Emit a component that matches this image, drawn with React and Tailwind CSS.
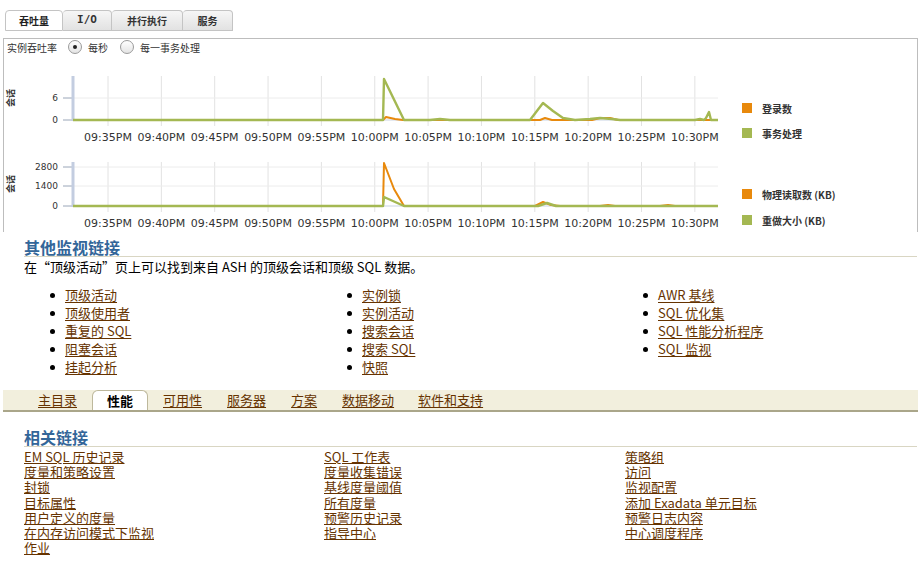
import React from 'react';

const times = ['09:35PM', '09:40PM', '09:45PM', '09:50PM', '09:55PM', '10:00PM', '10:05PM', '10:10PM', '10:15PM', '10:20PM', '10:25PM', '10:30PM'];
const gx = times.map((_, i) => 108 + i * 53.35);

function Chart({ top, axisTop, zeroY, ticks, grid, orange, green, legend }) {
  return (
    <div className="flex h-[80px]">
      <svg width="716" height="80" viewBox={`4 ${top} 716 80`} className="shrink-0">
        {gx.map((x) => (
          <line key={x} x1={x} x2={x} y1={axisTop} y2={zeroY + 6} stroke="#e2e2e2" strokeWidth="1" />
        ))}
        {grid.map((y) => (
          <line key={y} x1="73" x2="718" y1={y} y2={y} stroke="#ececec" strokeWidth="1" />
        ))}
        {ticks.map((t) => (
          <g key={t.label}>
            <line x1="63" x2="72" y1={t.y} y2={t.y} stroke="#9aa6b8" strokeWidth="1" />
            <text x="58" y={t.y + 3} textAnchor="end" fontSize="9" fontFamily="DejaVu Sans, sans-serif" fill="#333">
              {t.label}
            </text>
          </g>
        ))}
        <line x1="73" x2="73" y1={axisTop} y2={zeroY + 1} stroke="#c3cde0" strokeWidth="3" />
        <line x1="73" x2="718" y1={zeroY} y2={zeroY} stroke="#c9d3e4" strokeWidth="1" />
        <polyline points={orange} fill="none" stroke="#e8890c" strokeWidth="2" strokeLinejoin="round" />
        <polyline points={green} fill="none" stroke="#a4b852" strokeWidth="2.4" strokeLinejoin="round" />
        <text
          x="0"
          y="0"
          transform={`translate(14 ${(axisTop + zeroY) / 2}) rotate(-90)`}
          textAnchor="middle"
          fontSize="9"
          fontWeight="bold"
          fontFamily="Noto Sans CJK SC, sans-serif"
          fill="#333"
        >
          会话
        </text>
        {times.map((t, i) => (
          <text key={t} x={gx[i]} y={zeroY + 21} textAnchor="middle" fontSize="11" fontFamily="DejaVu Sans, sans-serif" fill="#333">
            {t}
          </text>
        ))}
      </svg>
      <div className={`ml-[22px] flex flex-col ${legend.pad}`}>
        {legend.items.map((it) => (
          <div key={it.label} className="flex h-[12px] items-center">
            <span className={`h-[10px] w-[10px] ${it.color}`} />
            <span className="ml-[10px] text-[10px] font-bold text-[#333]">{it.label}</span>
          </div>
        ))}
      </div>
    </div>
  );
}

function Radio({ checked, label, className }) {
  return (
    <div className={`flex items-center ${className}`}>
      <span className="flex h-[14px] w-[14px] items-center justify-center rounded-full border border-[#9a9a9a] bg-gradient-to-b from-white to-[#e4e4e4]">
        {checked && <span className="h-[4px] w-[4px] rounded-full bg-[#222]" />}
      </span>
      <span className="ml-[6px] text-[10px] text-[#333]">{label}</span>
    </div>
  );
}

function Bullet({ children }) {
  return (
    <li className="flex h-[18px] items-center">
      <span className="ml-[26px] h-[5px] w-[5px] rounded-full bg-black" />
      <a href="#" className="ml-[10px] text-[#663300] underline underline-offset-2">
        {children}
      </a>
    </li>
  );
}

const monitorCols = [
  ['顶级活动', '顶级使用者', '重复的 SQL', '阻塞会话', '挂起分析'],
  ['实例锁', '实例活动', '搜索会话', '搜索 SQL', '快照'],
  ['AWR 基线', 'SQL 优化集', 'SQL 性能分析程序', 'SQL 监视'],
];

const relatedCols = [
  ['EM SQL 历史记录', '度量和策略设置', '封锁', '目标属性', '用户定义的度量', '在内存访问模式下监视', '作业'],
  ['SQL 工作表', '度量收集错误', '基线度量阈值', '所有度量', '预警历史记录', '指导中心'],
  ['策略组', '访问', '监视配置', '添加 Exadata 单元目标', '预警日志内容', '中心调度程序'],
];

export default function App() {
  return (
    <div className="h-[563px] w-[924px] overflow-hidden bg-white text-[13px] text-black" style={{ fontFamily: '"Noto Sans CJK SC", sans-serif' }}>
      {/* top tabs */}
      <div className="flex h-[31px] items-end pl-[5px]">
        <div className="flex h-[21px] w-[58px] items-center justify-center rounded-t-[4px] border border-[#c4c4c4] bg-white text-[10px] font-bold text-[#222]">
          吞吐量
        </div>
        <div className="flex h-[21px] w-[49px] items-center justify-center rounded-t-[4px] border border-l-0 border-[#c4c4c4] bg-gradient-to-b from-[#f6f6f6] to-[#e2e2e2] text-[11px] font-bold text-[#333]" style={{ fontFamily: '"DejaVu Sans Mono", monospace' }}>
          I/O
        </div>
        <div className="flex h-[21px] w-[71px] items-center justify-center rounded-t-[4px] border border-l-0 border-[#c4c4c4] bg-gradient-to-b from-[#f6f6f6] to-[#e2e2e2] text-[10px] font-bold text-[#333]">
          并行执行
        </div>
        <div className="flex h-[21px] w-[50px] items-center justify-center rounded-t-[4px] border border-l-0 border-[#c4c4c4] bg-gradient-to-b from-[#f6f6f6] to-[#e2e2e2] text-[10px] font-bold text-[#333]">
          服务
        </div>
      </div>

      {/* chart panel */}
      <div className="ml-[3px] mt-[7px] h-[194px] w-[915px] border-x border-t border-[#bdbdbd]">
        <div className="mt-[1px] flex h-[14px] items-center">
          <span className="ml-[3px] text-[10px] text-[#333]">实例吞吐率</span>
          <Radio checked label="每秒" className="ml-[11px]" />
          <Radio label="每一事务处理" className="ml-[12px]" />
        </div>
        <div className="mt-[14px]">
          <Chart
            top={68}
            axisTop={76}
            zeroY={120}
            ticks={[{ label: '6', y: 98 }, { label: '0', y: 120 }]}
            grid={[98]}
            orange="73,120 383,120 386,117 395,119 403,120 540,120 545,118 552,120 592,120 600,118 610,118 618,120 718,120"
            green="73,120 383,120 384,79 404,120 430,120 440,119 450,120 530,120 543,103 553,111 563,118 575,120 590,119 600,118 612,119 620,120 695,120 700,119 704,120 706,118 709,112 711,120 718,120"
            legend={{
              pad: 'pt-[34px] gap-[13px]',
              items: [
                { label: '登录数', color: 'bg-[#e8890c]' },
                { label: '事务处理', color: 'bg-[#a4b852]' },
              ],
            }}
          />
        </div>
        <div className="mt-[4px]">
          <Chart
            top={152}
            axisTop={162}
            zeroY={206}
            ticks={[{ label: '2800', y: 167 }, { label: '1400', y: 186 }, { label: '0', y: 206 }]}
            grid={[167, 186]}
            orange="73,206 383,206 384,163 394,189 404,206 535,206 543,202 551,205 560,206 600,206 608,205 615,206 660,206 668,205 675,206 718,206"
            green="73,206 383,206 384,197 404,206 538,206 547,203 556,206 718,206"
            legend={{
              pad: 'pt-[36px] gap-[14px]',
              items: [
                { label: '物理读取数 (KB)', color: 'bg-[#e8890c]' },
                { label: '重做大小 (KB)', color: 'bg-[#a4b852]' },
              ],
            }}
          />
        </div>
      </div>

      {/* other monitoring links */}
      <div className="ml-[24px] mr-[7px] mt-[6px] flex h-[19px] items-center border-b border-[#d9d6c3] text-[16px] font-bold leading-[18px] text-[#336699]">
        其他监视链接
      </div>
      <div className="ml-[24px] mt-[1px] h-[18px] leading-[18px]">在“顶级活动”页上可以找到来自 ASH 的顶级会话和顶级 SQL 数据。</div>
      <div className="ml-[24px] mt-[10px] grid grid-cols-[297px_296px_1fr]">
        {monitorCols.map((col, i) => (
          <ul key={i}>
            {col.map((l) => (
              <Bullet key={l}>{l}</Bullet>
            ))}
          </ul>
        ))}
      </div>

      {/* bottom tab bar */}
      <div className="ml-[3px] mt-[14px] flex h-[22px] w-[915px] items-stretch border-b-2 border-[#aaa68a] bg-[#f2efdd]">
        <a href="#" className="ml-[35px] flex items-center text-[#663300] underline underline-offset-2">主目录</a>
        <div className="ml-[15px] flex w-[56px] items-center justify-center rounded-t-[6px] border-x border-t border-[#bdb89c] bg-white font-bold">
          性能
        </div>
        <a href="#" className="ml-[15px] flex items-center text-[#663300] underline underline-offset-2">可用性</a>
        <a href="#" className="ml-[25px] flex items-center text-[#663300] underline underline-offset-2">服务器</a>
        <a href="#" className="ml-[25px] flex items-center text-[#663300] underline underline-offset-2">方案</a>
        <a href="#" className="ml-[25px] flex items-center text-[#663300] underline underline-offset-2">数据移动</a>
        <a href="#" className="ml-[24px] flex items-center text-[#663300] underline underline-offset-2">软件和支持</a>
      </div>

      {/* related links */}
      <div className="ml-[24px] mr-[7px] mt-[16px] flex h-[19px] items-center border-b border-[#d9d6c3] text-[16px] font-bold leading-[18px] text-[#336699]">
        相关链接
      </div>
      <div className="ml-[24px] mt-[2px] grid grid-cols-[300px_301px_1fr] leading-[15.2px]">
        {relatedCols.map((col, i) => (
          <div key={i} className="flex flex-col items-start">
            {col.map((l) => (
              <a key={l} href="#" className="h-[15.2px] text-[#663300] underline underline-offset-1">
                {l}
              </a>
            ))}
          </div>
        ))}
      </div>
    </div>
  );
}
